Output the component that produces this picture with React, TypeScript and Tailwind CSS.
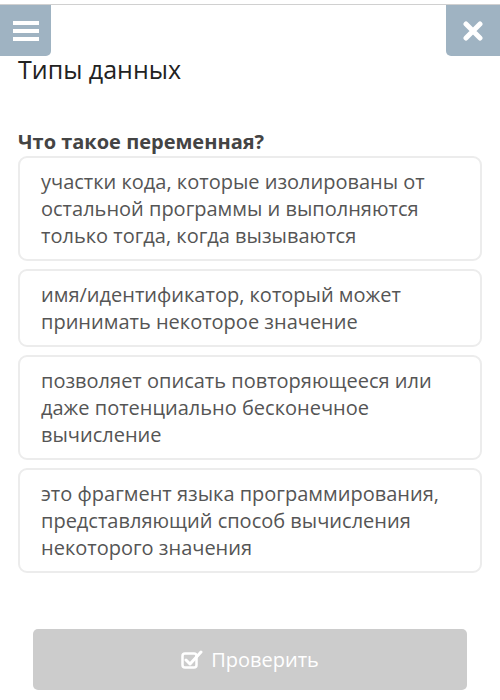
import React from "react";

const options = [
  "участки кода, которые изолированы от остальной программы и выполняются только тогда, когда вызываются",
  "имя/идентификатор, который может принимать некоторое значение",
  "позволяет описать повторяющееся или даже потенциально бесконечное вычисление",
  "это фрагмент языка программирования, представляющий способ вычисления некоторого значения",
];

export default function App() {
  return (
    <div
      className="w-[500px] h-[700px] bg-white overflow-hidden"
      style={{ fontFamily: '"Open Sans", "Noto Sans", sans-serif' }}
    >
      <div className="h-[5px] border-b border-[#d0d0d0]" />
      <div className="flex justify-between">
        <button className="w-[51px] h-[51px] bg-[#9fb3c2] rounded-br-[5px] flex items-center justify-center">
          <svg width="26" height="22" viewBox="0 0 26 22">
            <rect x="0" y="1" width="26" height="4" fill="#fff" />
            <rect x="0" y="9" width="26" height="4" fill="#fff" />
            <rect x="0" y="17" width="26" height="4" fill="#fff" />
          </svg>
        </button>
        <button className="w-[54px] h-[51px] bg-[#9fb3c2] rounded-bl-[5px] flex items-center justify-center">
          <svg width="20" height="20" viewBox="0 0 20 20">
            <path d="M3 3 L17 17 M17 3 L3 17" stroke="#fff" strokeWidth="5" strokeLinecap="round" />
          </svg>
        </button>
      </div>
      <div className="px-[18px]">
        <h1 className="text-[25px] leading-[30px] text-[#222] -mt-[2px]">Типы данных</h1>
        <h2 className="mt-[45px] text-[20px] leading-[26px] font-bold text-[#444]">
          Что такое переменная?
        </h2>
        <div className="flex flex-col gap-[8px] mt-[1px]">
          {options.map((o) => (
            <div
              key={o}
              className="border-2 border-[#ececec] rounded-[9px] pl-[21px] pr-[18px] py-[10px] text-[20px] leading-[27px] text-[#555]"
            >
              {o}
            </div>
          ))}
        </div>
      </div>
      <div className="px-[33px] mt-[56px]">
        <button className="w-full h-[61px] bg-[#cccccc] rounded-[5px] flex items-center justify-center gap-[8px] text-white text-[20px]">
          <svg width="22" height="20" viewBox="0 0 22 20" fill="none">
            <rect x="1.5" y="3.5" width="14" height="14" rx="2.5" stroke="#fff" strokeWidth="2.5" />
            <path d="M5 10 L9 14 L20 2" stroke="#fff" strokeWidth="3" strokeLinecap="round" strokeLinejoin="round" />
          </svg>
          <span>Проверить</span>
        </button>
      </div>
    </div>
  );
}
